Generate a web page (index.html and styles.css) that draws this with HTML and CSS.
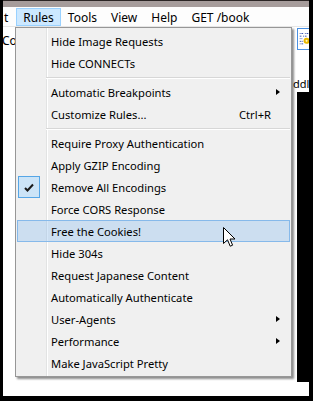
FILE: index.html
```html
<!DOCTYPE html>
<html lang="en">
<head>
    <meta charset="UTF-8">
    <meta name="viewport" content="width=device-width, initial-scale=1.0">
    <title>Rules menu</title>
    <link rel="stylesheet" href="styles.css">
</head>
<body>
    <div class="screen">
        <div class="titlebar"></div>
        <div class="menubar">
            <span class="mb-item mb-cut">t</span>
            <span class="mb-item active">Rules</span>
            <span class="mb-item">Tools</span>
            <span class="mb-item">View</span>
            <span class="mb-item">Help</span>
            <span class="mb-item">GET /book</span>
        </div>
        <div class="toolbar">
            <span class="tb-text">Co</span>
            <span class="tb-icon">
                <svg width="14" height="22" viewBox="0 0 14 22">
                    <g fill="#1f3fa8">
                        <rect x="2" y="3" width="1" height="1"/><rect x="4" y="3" width="2" height="1"/><rect x="8" y="3" width="1" height="1"/><rect x="10" y="3" width="2" height="1"/>
                        <rect x="2" y="6" width="2" height="1"/><rect x="6" y="6" width="1" height="1"/><rect x="8" y="6" width="2" height="1"/>
                        <rect x="2" y="9" width="1" height="1"/><rect x="4" y="9" width="1" height="1"/>
                        <rect x="2" y="12" width="2" height="1"/><rect x="5" y="12" width="1" height="1"/>
                        <rect x="2" y="15" width="1" height="1"/><rect x="4" y="15" width="2" height="1"/>
                    </g>
                    <circle cx="10" cy="12" r="3.5" fill="#e8b700"/>
                    <circle cx="10" cy="12" r="1.2" fill="#fff6c0"/>
                </svg>
            </span>
        </div>
        <div class="content">
            <span class="behind">ddle</span>
        </div>
        <div class="edge"></div>

        <div class="menu">
            <div class="item"><span class="label">Hide Image Requests</span></div>
            <div class="item"><span class="label">Hide CONNECTs</span></div>
            <div class="sep"></div>
            <div class="item"><span class="label">Automatic Breakpoints</span><span class="more"><i class="arrow"></i></span></div>
            <div class="item"><span class="label">Customize Rules...</span><span class="key">Ctrl+R</span><span class="more"></span></div>
            <div class="sep"></div>
            <div class="item"><span class="label">Require Proxy Authentication</span></div>
            <div class="item"><span class="label">Apply GZIP Encoding</span></div>
            <div class="item checked"><span class="check">
                <svg width="10" height="9" viewBox="0 0 10 9"><path d="M1 5 L3.5 7.5 L9 1.5" fill="none" stroke="#1a1a1a" stroke-width="2"/></svg>
            </span><span class="label">Remove All Encodings</span></div>
            <div class="item"><span class="label">Force CORS Response</span></div>
            <div class="item hover"><span class="label">Free the Cookies!</span></div>
            <div class="item"><span class="label">Hide 304s</span></div>
            <div class="item"><span class="label">Request Japanese Content</span></div>
            <div class="item"><span class="label">Automatically Authenticate</span></div>
            <div class="item"><span class="label">User-Agents</span><span class="more"><i class="arrow"></i></span></div>
            <div class="item"><span class="label">Performance</span><span class="more"><i class="arrow"></i></span></div>
            <div class="item"><span class="label">Make JavaScript Pretty</span></div>
        </div>

        <svg class="cursor" width="13" height="21" viewBox="0 0 13 21">
            <path d="M0.5 0.5 L0.5 16.5 L4.5 12.8 L7.2 19.2 L9.6 18.2 L7 12 L12 12 Z" fill="#fff" stroke="#000" stroke-width="1"/>
        </svg>
    </div>
</body>
</html>
```

FILE: styles.css
```css
body {
    margin: 0;
    padding: 0;
    background-color: #000;
    font-family: "Noto Sans", "Open Sans", sans-serif;
    font-size: 11px;
    color: #000;
}

.screen {
    position: relative;
    margin-left: 3px;
    width: 306px;
    height: 396px;
    background-color: #fff;
    overflow: hidden;
}

.titlebar {
    height: 7px;
    background-color: #a69c9b;
    border-top: 1px solid #2a2424;
    box-sizing: border-box;
}

.menubar {
    display: flex;
    height: 20px;
    align-items: stretch;
    background-color: #fdfdfd;
    border-bottom: 1px solid #e6e6e6;
    box-sizing: border-box;
    font-size: 12px;
}

.mb-item {
    display: flex;
    align-items: center;
    padding: 0 6px;
    border: 1px solid transparent;
    margin-top: 1px;
    white-space: nowrap;
}

.mb-cut {
    padding: 0 7px 0 0;
}

.mb-item.active {
    background-color: #cce8ff;
    border-color: #99d1ff;
}

.toolbar {
    display: flex;
    justify-content: space-between;
    height: 23px;
    font-size: 12px;
}

.tb-text {
    margin-top: 5px;
    margin-left: -1px;
}

.tb-icon {
    display: flex;
    width: 14px;
    height: 22px;
    margin-top: 1px;
    margin-right: -2px;
    border: 1px solid #4a90e2;
    box-sizing: border-box;
    background-color: #fff;
}

.content {
    height: 42px;
    padding-left: 290px;
    white-space: nowrap;
}

.behind {
    display: block;
    padding-top: 27px;
    line-height: 14px;
}

.edge {
    position: absolute;
    left: 294px;
    top: 92px;
    width: 20px;
    height: 290px;
    background-color: #000;
}

.menu {
    position: absolute;
    left: 12px;
    top: 27px;
    width: 277px;
    padding: 2px 1px;
    box-sizing: border-box;
    background-color: #f0f0f0;
    background-image: linear-gradient(to right, transparent 30px, #e2e3e3 30px, #e2e3e3 31px, #fff 31px, #fff 32px, transparent 32px);
    border: 1px solid #979797;
    box-shadow: 2px 2px 2px rgba(0, 0, 0, 0.45);
    font-size: 11.2px;
}

.item {
    position: relative;
    display: flex;
    align-items: center;
    height: 22px;
    padding-left: 33px;
    border: 1px solid transparent;
    box-sizing: border-box;
    white-space: nowrap;
}

.item.hover {
    background-color: rgba(145, 193, 240, 0.38);
    border-color: #86b9ea;
}

.label {
    flex: 1;
}

.more {
    position: relative;
    width: 18px;
    height: 100%;
}

.arrow {
    position: absolute;
    left: 5px;
    top: 7px;
    width: 0;
    height: 0;
    border-left: 4px solid #000;
    border-top: 3.5px solid transparent;
    border-bottom: 3.5px solid transparent;
}

.check {
    position: absolute;
    left: 0;
    top: -1px;
    display: flex;
    align-items: center;
    justify-content: center;
    width: 22px;
    height: 22px;
    box-sizing: border-box;
    background-color: #cce4f7;
    border: 1px solid #56a6e6;
}

.sep {
    height: 7px;
    margin-left: 29px;
    background-image: linear-gradient(to bottom, transparent 3px, #d7d7d7 3px, #d7d7d7 4px, #fff 4px, #fff 5px, transparent 5px);
}

.cursor {
    position: absolute;
    left: 220px;
    top: 227px;
}
```
